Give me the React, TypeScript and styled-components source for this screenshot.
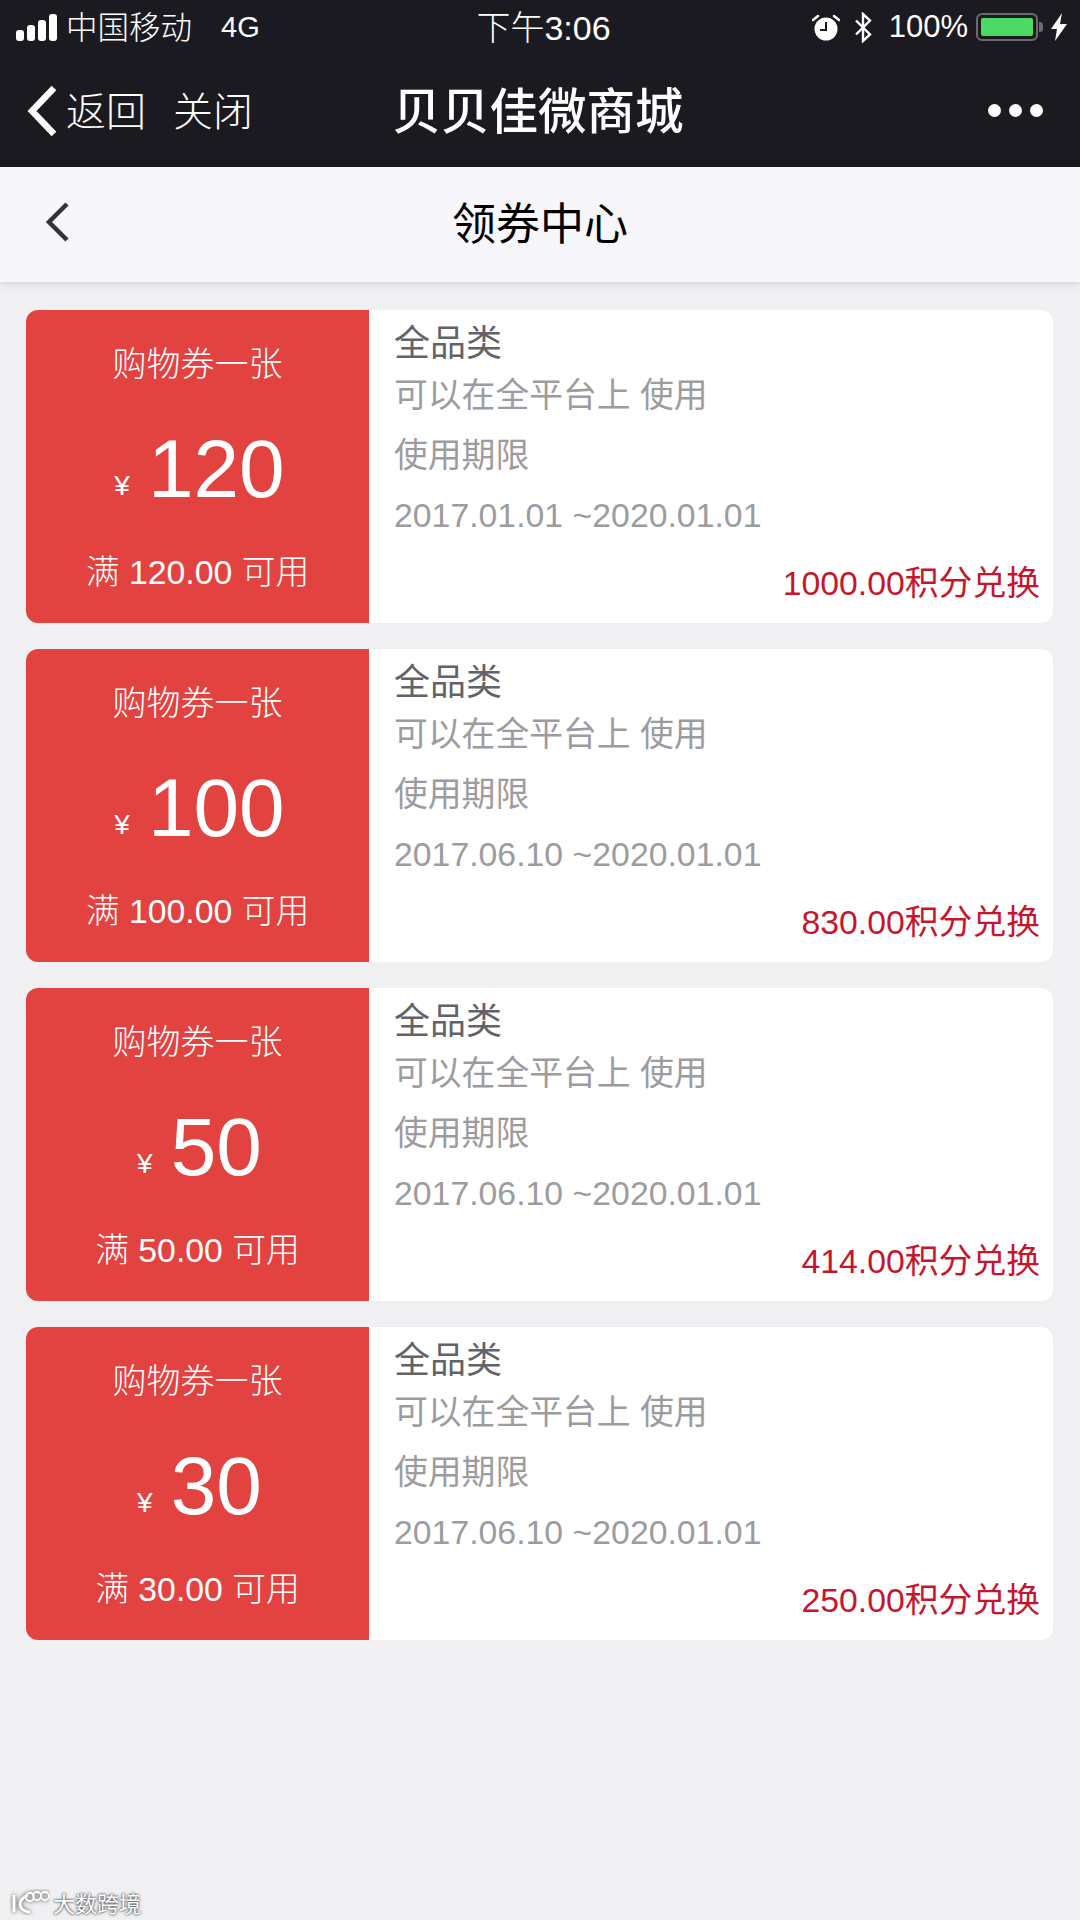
import styled, { createGlobalStyle } from 'styled-components';

const GlobalStyle = createGlobalStyle`
  html, body {
    margin: 0;
    padding: 0;
    background: #f0eff2;
  }
  * {
    box-sizing: border-box;
  }
`;

const FONT = `"Liberation Sans", "Noto Sans CJK SC", sans-serif`;

const Page = styled.div`
  position: relative;
  width: 1080px;
  height: 1920px;
  overflow: hidden;
  background: #f0eff2;
  font-family: ${FONT};
`;

const DarkTop = styled.div`
  background: #1b1a20;
  color: #fff;
  height: 167px;
`;

const StatusBar = styled.div`
  height: 54px;
  display: grid;
  grid-template-columns: 1fr auto 1fr;
  align-items: center;
  padding: 0 13px 0 16px;
  font-size: 31px;
  font-weight: 300;
`;

const StatusLeft = styled.div`
  display: flex;
  align-items: center;
  gap: 8px;
`;

const Carrier = styled.span`
  margin-bottom: 4px;
  font-size: 31.500px;
`;

const Network = styled.span`
  margin-left: 21px;
  font-size: 29px;
`;

const StatusRight = styled.div`
  display: flex;
  align-items: center;
  justify-content: flex-end;
`;

const Time = styled.div`
  margin: 0 0 4px 4px;
  font-size: 34px;
`;

const Percent = styled.span`
  margin: 0 8px 0 17px;
  font-size: 31px;
`;

const Battery = styled.div`
  position: relative;
  width: 62px;
  height: 28px;
  margin-right: 13px;
  padding: 3px;
  border: 2px solid #6b6b6f;
  border-radius: 6px;

  &::before {
    content: '';
    display: block;
    height: 100%;
    background: #4cd964;
    border-radius: 2px;
  }

  &::after {
    content: '';
    position: absolute;
    right: -7px;
    top: 7px;
    width: 4px;
    height: 10px;
    background: #6b6b6f;
    border-radius: 0 3px 3px 0;
  }
`;

const NavBar = styled.div`
  height: 113px;
  display: grid;
  grid-template-columns: 1fr auto 1fr;
  align-items: center;
  padding: 0 37px 0 27px;
`;

const NavLeft = styled.div`
  display: flex;
  align-items: center;
  font-size: 40px;
  font-weight: 300;
`;

const NavLink = styled.span<{ $gap: number }>`
  margin-left: ${(p) => p.$gap}px;
  margin-bottom: 4px;
`;

const NavTitle = styled.div`
  margin: 0 0 5px 6px;
  font-size: 48.500px;
  font-weight: 500;
`;

const MoreDots = styled.div`
  display: flex;
  justify-content: flex-end;
  gap: 8px;
`;

const Dot = styled.span`
  width: 13px;
  height: 13px;
  border-radius: 50%;
  background: #fff;
`;

const SubHeader = styled.div`
  position: relative;
  height: 115px;
  display: flex;
  align-items: center;
  justify-content: center;
  padding-bottom: 8px;
  background: #f7f6fa;
  box-shadow: 0 2px 8px rgba(0, 0, 0, 0.12);
  color: #000;
  font-size: 44px;
`;

const SubBack = styled.svg`
  position: absolute;
  left: 44px;
  top: 34px;
`;

const List = styled.div`
  display: flex;
  flex-direction: column;
  gap: 26px;
  padding: 28px 27px 0 26px;
`;

const Card = styled.div`
  display: flex;
  height: 313px;
  border-radius: 12px;
  overflow: hidden;
  background: #fff;
`;

const RedPanel = styled.div`
  flex: 0 0 343px;
  display: flex;
  flex-direction: column;
  align-items: center;
  padding-top: 32px;
  background: #e24340;
  color: #fff;
  font-weight: 300;
`;

const TicketName = styled.div`
  font-size: 34px;
  line-height: 44px;
`;

const Amount = styled.div`
  display: flex;
  align-items: baseline;
  margin: 38px 0 0 4px;
  height: 90px;
  line-height: 90px;
  font-size: 82px;
`;

const Yen = styled.span`
  margin-right: 18px;
  font-size: 28px;
  transform: translateY(-2px);
`;

const Threshold = styled.div`
  margin-top: 36px;
  font-size: 33.800px;
  line-height: 44px;
`;

const InfoPanel = styled.div`
  flex: 1;
  display: flex;
  flex-direction: column;
  padding: 14px 13px 20px 25px;
`;

const Category = styled.div`
  color: #636367;
  font-size: 36px;
  line-height: 40px;
  margin-bottom: 1px;
`;

const InfoLine = styled.div`
  color: #9c9ca0;
  font-size: 33.800px;
  line-height: 60px;
`;

const Exchange = styled.div`
  margin-top: auto;
  text-align: right;
  color: #c5162e;
  font-size: 33.800px;
  line-height: 40px;
`;

const Watermark = styled.div`
  position: absolute;
  left: 10px;
  top: 1886px;
  display: flex;
  align-items: center;
  gap: 3px;
  color: #fff;
  font-size: 22px;
  text-shadow: 0 0 3px rgba(70, 70, 70, 1), 0 0 2px rgba(70, 70, 70, 0.8);
`;

const coupons = [
  { value: '120', min: '120.00', start: '2017.01.01', points: '1000.00' },
  { value: '100', min: '100.00', start: '2017.06.10', points: '830.00' },
  { value: '50', min: '50.00', start: '2017.06.10', points: '414.00' },
  { value: '30', min: '30.00', start: '2017.06.10', points: '250.00' },
];

function SignalIcon() {
  return (
    <svg width="42" height="27" viewBox="0 0 42 27" fill="#fff">
      <rect x="0" y="16" width="8" height="11" rx="3" />
      <rect x="11" y="11" width="8" height="16" rx="3" />
      <rect x="22" y="6" width="8" height="21" rx="3" />
      <rect x="33" y="0" width="8" height="27" rx="3" />
    </svg>
  );
}

function AlarmIcon() {
  return (
    <svg width="28" height="27" viewBox="0 0 28 27">
      <circle cx="14" cy="15" r="11.500" fill="#fff" />
      <path d="M14 8v8H8" fill="none" stroke="#1b1a20" strokeWidth="2" />
      <path d="M1 6l5-4M27 6l-5-4" stroke="#fff" strokeWidth="2.500" strokeLinecap="round" />
    </svg>
  );
}

function BluetoothIcon() {
  return (
    <svg width="18" height="31" viewBox="0 0 18 31" style={{ marginLeft: 14 }}>
      <path
        d="M2 8.500l14 14-7 6.500V2l7 6.500-14 14"
        fill="none"
        stroke="#fff"
        strokeWidth="2.400"
      />
    </svg>
  );
}

function BoltIcon() {
  return (
    <svg width="16" height="28" viewBox="0 0 16 28" fill="#fff">
      <path d="M11 0L0 16h6l-2 12L16 11H9z" />
    </svg>
  );
}

function LogoMark() {
  return (
    <svg width="40" height="26" viewBox="0 0 40 26" fill="none" stroke="#fff" strokeWidth="2.800">
      <g style={{ filter: 'drop-shadow(0 0 2px rgb(70,70,70))' }}>
        <path d="M4 6v17" />
        <path d="M18 6c-6 3-8 6-8 9 0 5 5 8 10 8" />
        <circle cx="20" cy="8" r="4" strokeWidth="1.800" />
        <circle cx="27" cy="7" r="4" strokeWidth="1.800" />
        <circle cx="35" cy="7" r="4" strokeWidth="1.800" />
      </g>
    </svg>
  );
}

function App() {
  return (
    <Page>
      <GlobalStyle />
      <DarkTop>
        <StatusBar>
          <StatusLeft>
            <SignalIcon />
            <Carrier>中国移动</Carrier>
            <Network>4G</Network>
          </StatusLeft>
          <Time>下午3:06</Time>
          <StatusRight>
            <AlarmIcon />
            <BluetoothIcon />
            <Percent>100%</Percent>
            <Battery />
            <BoltIcon />
          </StatusRight>
        </StatusBar>
        <NavBar>
          <NavLeft>
            <svg width="30" height="52" viewBox="0 0 30 52">
              <path d="M27 3L5 26l22 23" fill="none" stroke="#fff" strokeWidth="6.500" />
            </svg>
            <NavLink $gap={9}>返回</NavLink>
            <NavLink $gap={27}>关闭</NavLink>
          </NavLeft>
          <NavTitle>贝贝佳微商城</NavTitle>
          <MoreDots>
            <Dot />
            <Dot />
            <Dot />
          </MoreDots>
        </NavBar>
      </DarkTop>
      <SubHeader>
        <SubBack width="26" height="42" viewBox="0 0 26 42">
          <path d="M23 3L5 21l18 18" fill="none" stroke="#333338" strokeWidth="4.500" />
        </SubBack>
        领券中心
      </SubHeader>
      <List>
        {coupons.map((c) => (
          <Card key={c.value}>
            <RedPanel>
              <TicketName>购物券一张</TicketName>
              <Amount>
                <Yen>¥</Yen>
                {c.value}
              </Amount>
              <Threshold>满 {c.min} 可用</Threshold>
            </RedPanel>
            <InfoPanel>
              <Category>全品类</Category>
              <InfoLine>可以在全平台上 使用</InfoLine>
              <InfoLine>使用期限</InfoLine>
              <InfoLine>{c.start} ~2020.01.01</InfoLine>
              <Exchange>{c.points}积分兑换</Exchange>
            </InfoPanel>
          </Card>
        ))}
      </List>
      <Watermark>
        <LogoMark />
        <span>大数跨境</span>
      </Watermark>
    </Page>
  );
}

export default App;
